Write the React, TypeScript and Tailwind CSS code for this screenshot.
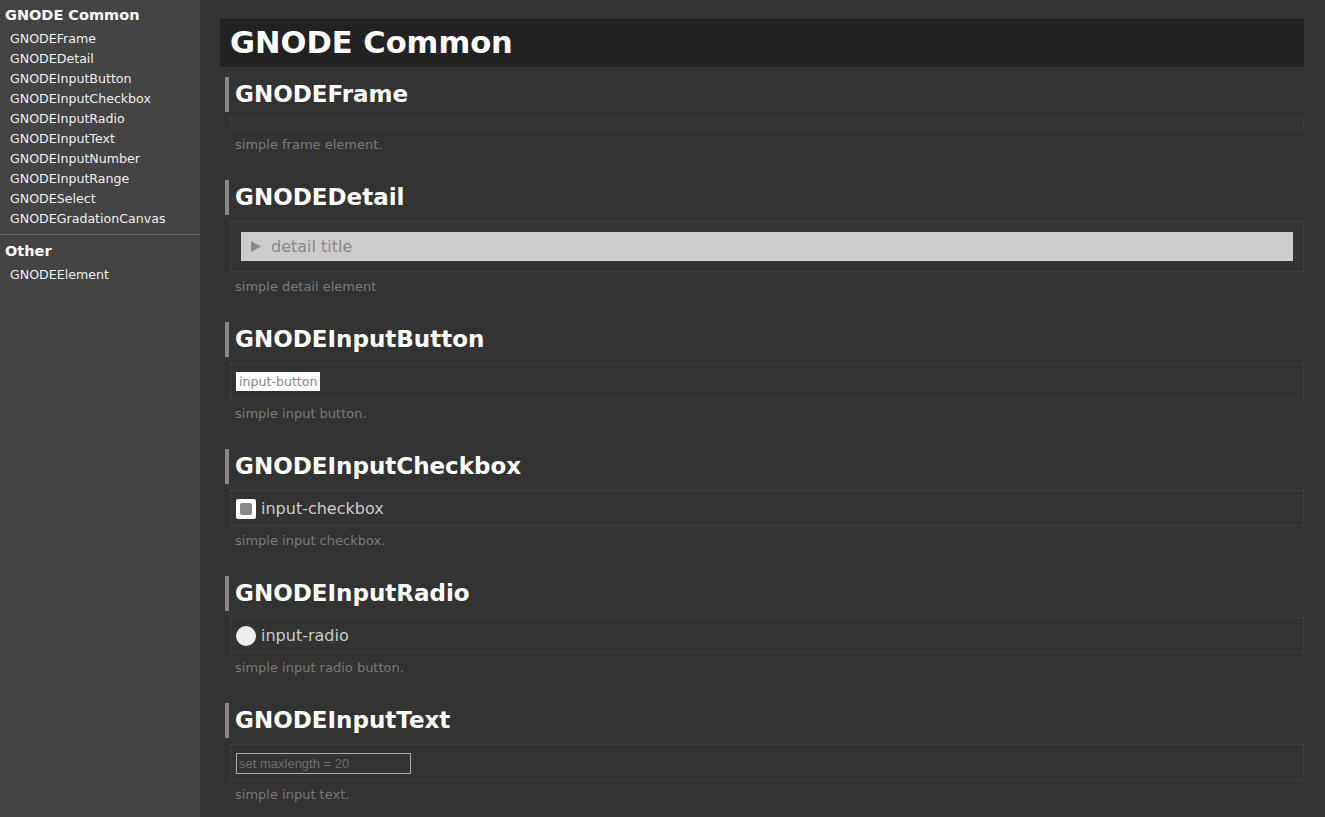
const font = { fontFamily: '"DejaVu Sans", Verdana, sans-serif' };

const commonLinks = [
  'GNODEFrame',
  'GNODEDetail',
  'GNODEInputButton',
  'GNODEInputCheckbox',
  'GNODEInputRadio',
  'GNODEInputText',
  'GNODEInputNumber',
  'GNODEInputRange',
  'GNODESelect',
  'GNODEGradationCanvas',
];

const Section = ({ title, desc, first, children }: { title: string; desc: string; first?: boolean; children?: React.ReactNode }) => (
  <section className={first ? 'mt-[10px]' : 'mt-[25px]'}>
    <h2 className="ml-[5px] border-l-4 border-[#888] pl-[6px] text-[23px] font-bold leading-[35px] text-white">{title}</h2>
    <div className="ml-[10px] mt-[6px] border border-dotted border-[#4a4a4a] p-[5px]">{children}</div>
    <p className="ml-[15px] mt-[5px] text-[13px] leading-[20px] text-[#7a7a7a]">{desc}</p>
  </section>
);

const App = () => {
  return (
    <div className="flex h-[817px] overflow-hidden bg-[#333]" style={font}>
      {/* Side menu */}
      <aside className="h-full w-[200px] shrink-0 bg-[#444] pt-px text-[#eee]">
        <h3 className="px-[5px] pt-[4px] text-[14.5px] font-bold leading-[20px] text-white">GNODE Common</h3>
        <ul className="mt-[4px]">
          {commonLinks.map((name) => (
            <li key={name} className="pl-[10px] text-[12.6px] leading-[20px]">{name}</li>
          ))}
        </ul>
        <div className="mt-[5px] border-t border-[#666]" />
        <h3 className="mt-[6px] px-[5px] text-[14.5px] font-bold leading-[20px] text-white">Other</h3>
        <ul className="mt-[4px]">
          <li className="pl-[10px] text-[12.6px] leading-[20px]">GNODEElement</li>
        </ul>
      </aside>

      {/* Main */}
      <main className="flex-1 overflow-hidden pl-5 pr-[21px] pt-[19px]">
        <h1 className="h-12 bg-[#222] pl-[10px] text-[30.5px] font-bold leading-[48px] text-white">GNODE Common</h1>

        <Section first title="GNODEFrame" desc="simple frame element." />

        <Section title="GNODEDetail" desc="simple detail element">
          <div className="m-[5px] flex h-[29px] items-center gap-[10px] bg-[#ccc] pl-[10px] text-[16px] text-[#888]">
            <svg width="10" height="11" viewBox="0 0 10 11" className="shrink-0">
              <path d="M0 0 L10 5.5 L0 11 Z" fill="#888" />
            </svg>
            <span>detail title</span>
          </div>
        </Section>

        <Section title="GNODEInputButton" desc="simple input button.">
          <div className="flex h-[24px] items-start pt-[3px]">
            <button className="h-[19px] bg-white px-[3px] text-[12.6px] leading-[19px] text-[#888]">input-button</button>
          </div>
        </Section>

        <Section title="GNODEInputCheckbox" desc="simple input checkbox.">
          <div className="flex h-[24px] items-center gap-[5px] pt-[2px]">
            <span className="flex h-5 w-5 items-center justify-center rounded-[2px] bg-white">
              <span className="h-3 w-3 rounded-[2px] bg-[#888]" />
            </span>
            <span className="text-[16px] text-[#ccc]">input-checkbox</span>
          </div>
        </Section>

        <Section title="GNODEInputRadio" desc="simple input radio button.">
          <div className="flex h-[24px] items-center gap-[5px] pt-[2px]">
            <span className="h-5 w-5 rounded-full bg-[#eee]" />
            <span className="text-[16px] text-[#ccc]">input-radio</span>
          </div>
        </Section>

        <Section title="GNODEInputText" desc="simple input text.">
          <div className="flex h-[24px] items-start pt-[3px]">
            <input
              className="h-[21px] w-[175px] border border-[#aaa] bg-transparent px-[2px] text-[13px] text-[#ccc] placeholder:text-[#6f6f6f] outline-none"
              style={{ fontFamily: '"Liberation Sans", Arial, sans-serif' }}
              maxLength={20}
              placeholder="set maxlength = 20"
            />
          </div>
        </Section>
      </main>
    </div>
  );
};

export default App;
